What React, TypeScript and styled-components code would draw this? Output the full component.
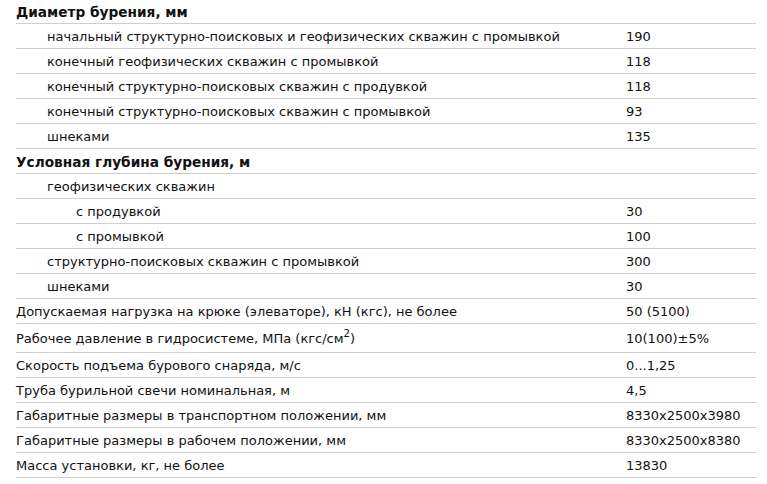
import React from "react";
import styled, { createGlobalStyle } from "styled-components";

const Global = createGlobalStyle`
  html, body { margin: 0; padding: 0; background: #fff; }
  body { font-family: "DejaVu Sans", Verdana, sans-serif; color: #111; }
`;

const Table = styled.div`
  margin: -1px 12px 0 16px;
  width: 740px;
  display: flex;
  flex-direction: column;
`;

const Row = styled.div<{ $h?: number }>`
  display: grid;
  grid-template-columns: 610px 1fr;
  align-items: center;
  box-sizing: border-box;
  height: ${(p) => p.$h ?? 25}px;
  padding-top: 1px;
  border-bottom: 1px solid #cfcfcf;
`;

const Label = styled.div<{ $level: number; $bold?: boolean }>`
  padding-left: ${(p) => (p.$level === 0 ? 0 : p.$level === 1 ? 31 : 60)}px;
  font-size: ${(p) => (p.$bold ? 13.7 : 13)}px;
  font-weight: ${(p) => (p.$bold ? 700 : 400)};
  line-height: 16px;
  white-space: nowrap;
`;

const Value = styled.div`
  font-size: 13px;
  line-height: 16px;
  white-space: nowrap;
`;

const Sup = styled.sup`
  font-size: 10px;
  line-height: 0;
  vertical-align: 6px;
`;

type Item = {
  label: React.ReactNode;
  value?: React.ReactNode;
  level: number;
  bold?: boolean;
  h?: number;
};

const items: Item[] = [
  { label: "Диаметр бурения, мм", level: 0, bold: true },
  { label: "начальный структурно-поисковых и геофизических скважин с промывкой", value: "190", level: 1 },
  { label: "конечный геофизических скважин с промывкой", value: "118", level: 1 },
  { label: "конечный структурно-поисковых скважин с продувкой", value: "118", level: 1 },
  { label: "конечный структурно-поисковых скважин с промывкой", value: "93", level: 1 },
  { label: "шнеками", value: "135", level: 1 },
  { label: "Условная глубина бурения, м", level: 0, bold: true },
  { label: "геофизических скважин", level: 1 },
  { label: "с продувкой", value: "30", level: 2 },
  { label: "с промывкой", value: "100", level: 2 },
  { label: "структурно-поисковых скважин с промывкой", value: "300", level: 1 },
  { label: "шнеками", value: "30", level: 1 },
  { label: "Допускаемая нагрузка на крюке (элеваторе), кН (кгс), не более", value: "50 (5100)", level: 0 },
  {
    label: (
      <>
        Рабочее давление в гидросистеме, МПа (кгс/см<Sup>2</Sup>)
      </>
    ),
    value: "10(100)±5%",
    level: 0,
    h: 29,
  },
  { label: "Скорость подъема бурового снаряда, м/с", value: "0...1,25", level: 0 },
  { label: "Труба бурильной свечи номинальная, м", value: "4,5", level: 0 },
  { label: "Габаритные размеры в транспортном положении, мм", value: "8330x2500x3980", level: 0 },
  { label: "Габаритные размеры в рабочем положении, мм", value: "8330x2500x8380", level: 0 },
  { label: "Масса установки, кг, не более", value: "13830", level: 0 },
];

export default function App() {
  return (
    <>
      <Global />
      <Table>
        {items.map((it, i) => (
          <Row key={i} $h={it.h}>
            <Label $level={it.level} $bold={it.bold}>
              {it.label}
            </Label>
            <Value>{it.value}</Value>
          </Row>
        ))}
      </Table>
    </>
  );
}
